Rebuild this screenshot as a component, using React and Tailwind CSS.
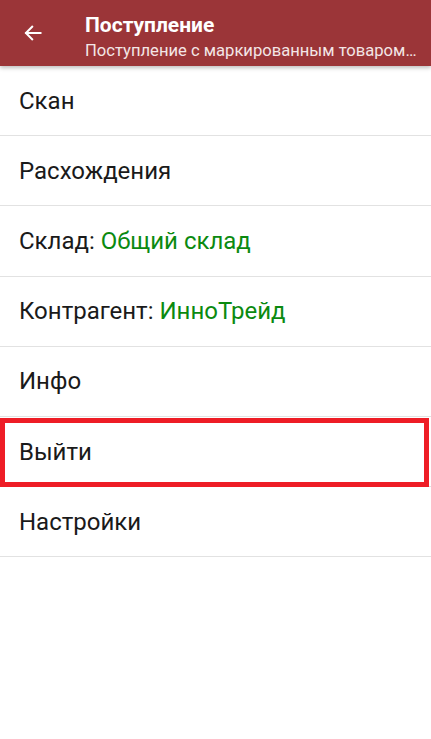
import React from 'react';

const items = [
    { label: 'Скан' },
    { label: 'Расхождения' },
    { label: 'Склад: ', value: 'Общий склад' },
    { label: 'Контрагент: ', value: 'ИнноТрейд' },
    { label: 'Инфо' },
    { label: 'Выйти', highlight: true },
    { label: 'Настройки' },
];

const App = () => {
    return (
        <div className="w-[431px] h-[739px] bg-white overflow-hidden" style={{ fontFamily: 'Roboto, "Noto Sans", sans-serif' }}>
            {/* Toolbar */}
            <header className="relative z-10 h-[66px] bg-[#9b3538] flex items-start shadow-[0_2px_4px_rgba(0,0,0,0.25)]">
                <div className="w-[85px] h-full flex items-center justify-center pr-[20px] shrink-0">
                    <svg width="20" height="20" viewBox="0 0 24 24" fill="none" stroke="white" strokeWidth="2.4" strokeLinecap="square">
                        <path d="M21 12H4" />
                        <path d="M11 4.5L3.5 12L11 19.5" />
                    </svg>
                </div>
                <div className="flex-1 min-w-0 pr-[6px] pt-[12.5px] text-white">
                    <div className="text-[21px] font-bold leading-[24px]">Поступление</div>
                    <div className="mt-[3px] text-[16.6px] leading-[22px] whitespace-nowrap overflow-hidden text-[#f3e6e6]">Поступление с маркированным товаром…</div>
                </div>
            </header>

            {/* Menu */}
            <div className="flex flex-col">
                {items.map((item, i) => (
                    <div key={i} className="relative h-[70.2px] border-b-[1.5px] border-[#e2e2e2] flex items-center pl-[19px] text-[24px] text-[#1a1a1a]">
                        <span>
                            {item.label}
                            {item.value && <span className="text-[#0b8a10]">{item.value}</span>}
                        </span>
                        {item.highlight && (
                            <div className="absolute left-0 right-[2px] top-[1px] bottom-[-1px] border-[5px] border-[#ee1d26]" />
                        )}
                    </div>
                ))}
            </div>
        </div>
    );
};

export default App;
